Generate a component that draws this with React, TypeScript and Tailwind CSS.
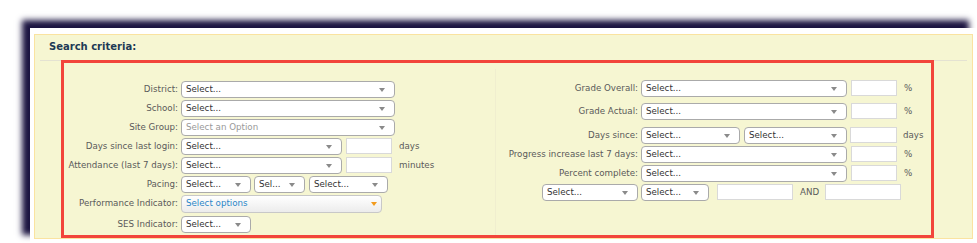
import React from "react";

const Arrow = ({ color = "#8a8a8a" }: { color?: string }) => (
  <svg width="6" height="4" viewBox="0 0 6 4" className="shrink-0">
    <polygon points="0,0 6,0 3,4" fill={color} />
  </svg>
);

const Sel = ({
  w,
  text = "Select...",
  placeholder = false,
}: {
  w: string;
  text?: string;
  placeholder?: boolean;
}) => (
  <div
    className={`${w} h-[17px] shrink-0 bg-white border border-[#aaaaaa] rounded-[4px] flex items-center justify-between pl-[4px] pr-[9px] overflow-hidden`}
  >
    <span className={`whitespace-nowrap ${placeholder ? "text-[#999999]" : "text-[#333333]"}`}>{text}</span>
    <Arrow />
  </div>
);

const Inp = ({ w }: { w: string }) => (
  <div className={`${w} h-[16px] shrink-0 self-start bg-white border border-[#d9d9d9]`} />
);

const LRow = ({ label, children, cls = "mb-[2px]" }: { label: string; children?: React.ReactNode; cls?: string }) => (
  <div className={`flex items-center h-[17px] ${cls}`}>
    <div className="w-[117px] shrink-0 text-right pr-[3px] text-[#5a5a5a] whitespace-nowrap">{label}</div>
    {children}
  </div>
);

const RRow = ({ label, children, cls = "mb-[2px]" }: { label?: React.ReactNode; children?: React.ReactNode; cls?: string }) => (
  <div className={`flex items-center h-[17px] ${cls}`}>
    <div className="w-[145px] shrink-0 flex justify-end pr-[3px] text-[#5a5a5a] whitespace-nowrap">{label}</div>
    {children}
  </div>
);

export default function App() {
  return (
    <div
      className="w-[977px] h-[243px] bg-white overflow-hidden"
      style={{ fontFamily: "'DejaVu Sans', Verdana, sans-serif" }}
    >
      <div className="ml-[30px] mt-[28px] w-[947px] h-[215px] bg-white shadow-[-8px_-8px_6px_#1b1440] pt-[6px] pl-[4px] pr-[4px]">
        <div className="h-[205px] border border-[#fae3a0] bg-[#f6f6d2]">
          <div className="mx-[5px] h-[26px] border-b border-[#e4e2d2] flex items-center pl-[9px] pb-[2px]">
            <span className="text-[10px] font-bold text-[#1d3a55]">Search criteria:</span>
          </div>
          <div className="-mt-[1px] ml-[26px] w-[873px] h-[178px] border-[3px] border-[#f2453b] flex text-[8.7px]">
            <div className="w-[431px] shrink-0 pt-[18px]">
              <LRow label="District:">
                <Sel w="w-[214px]" />
              </LRow>
              <LRow label="School:">
                <Sel w="w-[214px]" />
              </LRow>
              <LRow label="Site Group:">
                <Sel w="w-[214px]" text="Select an Option" placeholder />
              </LRow>
              <LRow label="Days since last login:">
                <Sel w="w-[161px]" />
                <div className="w-[4px]" />
                <Inp w="w-[46px]" />
                <span className="ml-[7px] text-[#5a5a5a]">days</span>
              </LRow>
              <LRow label="Attendance (last 7 days):">
                <Sel w="w-[161px]" />
                <div className="w-[4px]" />
                <Inp w="w-[46px]" />
                <span className="ml-[7px] text-[#5a5a5a]">minutes</span>
              </LRow>
              <LRow label="Pacing:">
                <Sel w="w-[70px]" />
                <div className="w-[3px]" />
                <Sel w="w-[51px]" text="Sel..." />
                <div className="w-[4px]" />
                <Sel w="w-[79px]" />
              </LRow>
              <div className="flex items-center h-[18px] mb-[3px]">
                <div className="w-[117px] shrink-0 text-right pr-[3px] text-[#5a5a5a] whitespace-nowrap">Performance Indicator:</div>
                <div className="w-[201px] h-[18px] border border-[#c8c8c8] rounded-[4px] bg-gradient-to-b from-white to-[#ececec] flex items-center justify-between pl-[4px] pr-[4px]">
                  <span className="text-[#2a86c8]">Select options</span>
                  <Arrow color="#f29b1d" />
                </div>
              </div>
              <LRow label="SES Indicator:">
                <Sel w="w-[70px]" />
              </LRow>
            </div>
            <div className="flex-1 mt-[6px] pt-[11px] border-l border-[#f0eecf]">
              <RRow label="Grade Overall:" cls="mb-[6px]">
                <Sel w="w-[206px]" />
                <div className="w-[4px]" />
                <Inp w="w-[46px]" />
                <span className="ml-[7px] text-[#5a5a5a]">%</span>
              </RRow>
              <RRow label="Grade Actual:" cls="mb-[7px]">
                <Sel w="w-[206px]" />
                <div className="w-[4px]" />
                <Inp w="w-[46px]" />
                <span className="ml-[7px] text-[#5a5a5a]">%</span>
              </RRow>
              <RRow label="Days since:">
                <Sel w="w-[99px]" />
                <div className="w-[4px]" />
                <Sel w="w-[103px]" />
                <div className="w-[3px]" />
                <Inp w="w-[47px]" />
                <span className="ml-[6px] text-[#5a5a5a]">days</span>
              </RRow>
              <RRow label="Progress increase last 7 days:">
                <Sel w="w-[206px]" />
                <div className="w-[4px]" />
                <Inp w="w-[46px]" />
                <span className="ml-[7px] text-[#5a5a5a]">%</span>
              </RRow>
              <RRow label="Percent complete:">
                <Sel w="w-[206px]" />
                <div className="w-[4px]" />
                <Inp w="w-[46px]" />
                <span className="ml-[7px] text-[#5a5a5a]">%</span>
              </RRow>
              <RRow label={<Sel w="w-[96px]" />}>
                <Sel w="w-[68px]" />
                <div className="w-[8px]" />
                <Inp w="w-[76px]" />
                <span className="ml-[7px] mr-[6px] text-[#5a5a5a]">AND</span>
                <Inp w="w-[76px]" />
              </RRow>
            </div>
          </div>
        </div>
      </div>
    </div>
  );
}
